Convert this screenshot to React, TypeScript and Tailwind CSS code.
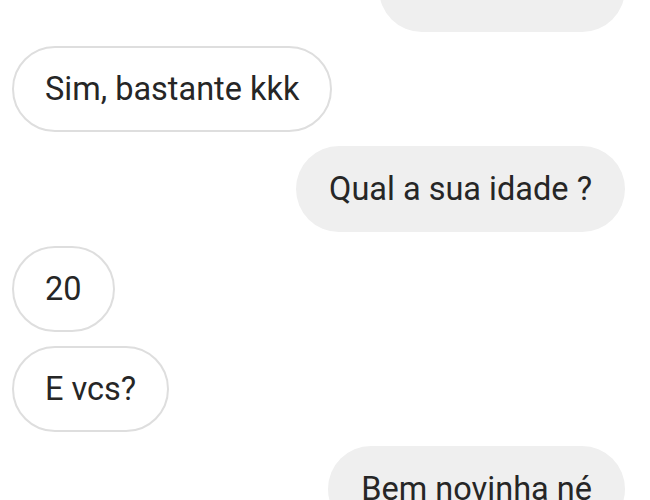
const messages: { text: string; mine: boolean }[] = [
  { text: '', mine: true },
  { text: 'Sim, bastante kkk', mine: false },
  { text: 'Qual a sua idade ?', mine: true },
  { text: '20', mine: false },
  { text: 'E vcs?', mine: false },
  { text: 'Bem novinha né', mine: true },
];

export default function App() {
  return (
    <div
      className="h-[500px] w-[650px] overflow-hidden bg-white"
      style={{ fontFamily: 'Roboto, "Liberation Sans", sans-serif' }}
    >
      <div className="-mt-[54px] flex flex-col gap-[14px] pl-3 pr-[25px]">
        {messages.map((m, i) => (
          <div key={i} className={m.mine ? 'flex justify-end' : 'flex justify-start'}>
            {m.mine ? (
              <div
                className={
                  'flex h-[86px] items-center rounded-full bg-[#efefef] px-[33px] text-[32.5px] text-[#262626] ' +
                  (i === 0 ? 'w-[246px]' : '')
                }
              >
                {m.text}
              </div>
            ) : (
              <div className="flex h-[86px] items-center rounded-full border-2 border-[#dedede] bg-white px-[31px] text-[32.5px] text-[#262626]">
                {m.text}
              </div>
            )}
          </div>
        ))}
      </div>
    </div>
  );
}
